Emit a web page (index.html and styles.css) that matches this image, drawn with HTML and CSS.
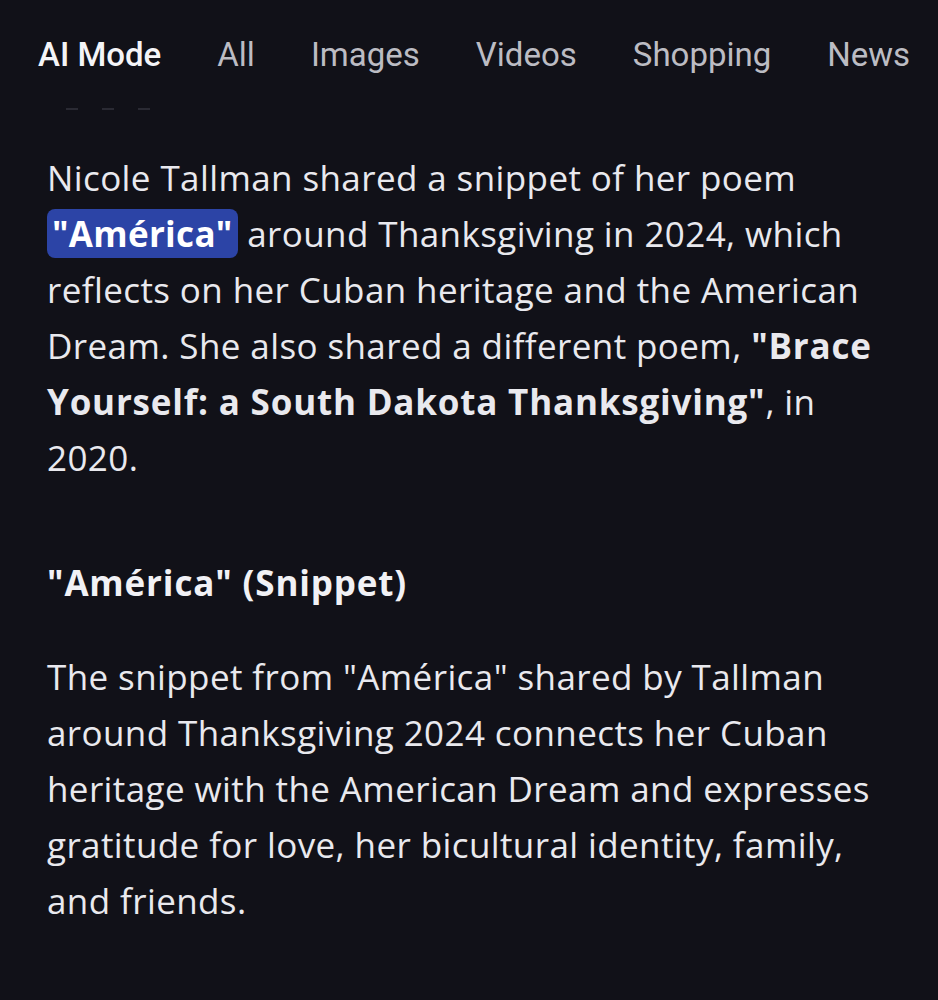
FILE: index.html
```html
<!DOCTYPE html>
<html lang="en">
<head>
<meta charset="utf-8">
<link rel="stylesheet" href="styles.css">
</head>
<body>
<nav class="tabs">
  <span class="tab active">AI Mode</span>
  <span class="tab">All</span>
  <span class="tab">Images</span>
  <span class="tab">Videos</span>
  <span class="tab">Shopping</span>
  <span class="tab">News</span>
</nav>
<div class="fade-dots"><span></span><span></span><span></span></div>
<main class="answer">
  <p class="para">Nicole Tallman shared a snippet of her poem <mark class="hl">"América"</mark> around Thanksgiving in 2024, which reflects on her Cuban heritage and the American Dream. She also shared a different poem, <b>"Brace Yourself: a South Dakota Thanksgiving"</b>, in 2020.</p>
  <h2 class="heading">"América" (Snippet)</h2>
  <p class="para">The snippet from "América" shared by Tallman around Thanksgiving 2024 connects her Cuban heritage with the American Dream and expresses gratitude for love, her bicultural identity, family, and friends.</p>
</main>
</body>
</html>
```

FILE: styles.css
```css
html, body {
  margin: 0;
  padding: 0;
  background: #111118;
  width: 938px;
  height: 1000px;
  overflow: hidden;
}
body {
  font-family: "Open Sans", "Noto Sans", sans-serif;
  color: #e9e9ee;
}
.tabs {
  display: flex;
  align-items: center;
  height: 56px;
  padding: 26px 0 0 38px;
  gap: 56px;
}
.tab {
  font-family: Roboto, "Noto Sans", sans-serif;
  font-size: 33px;
  color: #bcbcc3;
  white-space: nowrap;
}
.tab.active {
  color: #f4f4f7;
  font-weight: 500;
}
.fade-dots {
  display: flex;
  gap: 24px;
  padding: 26px 0 0 66px;
  height: 4px;
}
.fade-dots span {
  width: 12px;
  height: 2px;
  background: #2a2a33;
}
.answer {
  padding: 38px 0 0 47px;
  width: 845px;
}
.para {
  margin: 0;
  font-size: 35px;
  line-height: 56px;
  letter-spacing: 0.4px;
}
.para b {
  font-weight: 700;
  letter-spacing: 0.8px;
}
.hl {
  background: #2c44a6;
  color: #ffffff;
  font-weight: 700;
  letter-spacing: 0.3px;
  border-radius: 8px;
  padding: 1px 5px;
}
.heading {
  margin: 69px 0 38px 0;
  font-size: 35px;
  line-height: 56px;
  font-weight: 700;
  letter-spacing: 0.85px;
  color: #f1f1f5;
}
```
